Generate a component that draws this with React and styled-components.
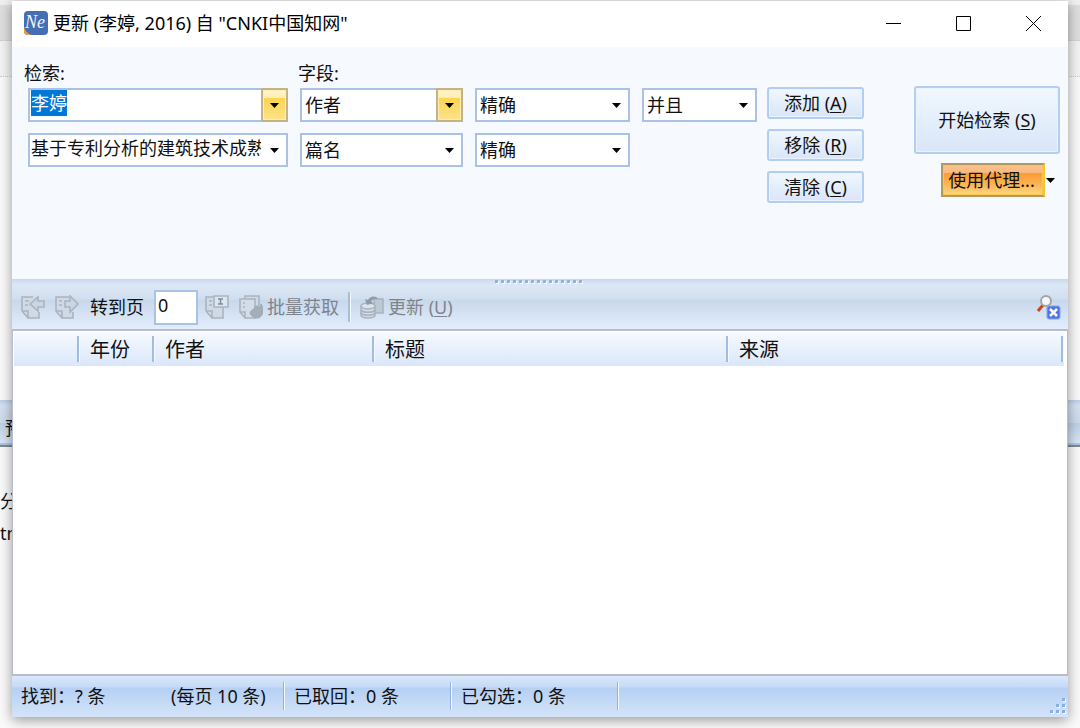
import React, { useEffect, useRef, useState } from 'react'
import styled, { createGlobalStyle, css } from 'styled-components'

const GlobalStyle = createGlobalStyle`
    *, *::before, *::after {
        box-sizing: border-box;
    }

    body {
        margin: 0;
        color: #111;
        font: 18px/24px "Noto Sans", "Noto Sans CJK SC", sans-serif;
        background: #f4f4f4;
    }

    button, input, select {
        margin: 0;
        padding: 0;
        border: 0;
        color: inherit;
        font: inherit;
        background: none;
        border-radius: 0;
        outline: none;
    }

    u {
        text-decoration-thickness: 1px;
        text-underline-offset: 2px;
    }
`

const Desktop = styled.div`
    position: relative;
    display: flex;
    min-height: 100vh;
    padding: 1px 12px 11px;
    overflow: hidden;
`

// the application that lies behind the dialog
const Behind = styled.div`
    position: absolute;
    inset: 0;
    display: grid;
    grid-template-rows: 5px 36px 36px 323px 47px 1fr;
    background: #fafafa;
`

const BehindRow = styled.div`
    background: ${props => props.$bg || 'transparent'};
    border-bottom: ${props => props.$dotted ? '1px dotted #ccc' : '0'};
`

const BehindBar = styled.div`
    padding: 16px 5px 0;
    background: linear-gradient(#bccfe5, #d5e2f2 12%, #cbdaec 50%, #bfd0e5 51%, #dbe8f8);
    border-bottom: 2px solid #85878b;
    box-shadow: inset 0 -2px #a9c7ec;
`

const BehindText = styled.div`
    padding-top: 38px;
    line-height: 32px;

    p {
        margin: 0;
    }
`

const Window = styled.main`
    position: relative;
    display: flex;
    flex-direction: column;
    flex: 1;
    min-width: 0;
    background: #f6f9fe;
    box-shadow: 0 3px 12px rgba(0, 0, 0, 0.4);
`

const TitleBar = styled.header`
    display: flex;
    align-items: center;
    height: 46px;
    padding: 0 0 2px 12px;
    background: #fff;
`

const Title = styled.h1`
    flex: 1;
    margin: 0 0 0 5px;
    color: #000;
    font-size: 18px;
    font-weight: 400;
    line-height: 24px;
`

const WindowButton = styled.button`
    display: grid;
    place-items: center;
    width: 70px;
    height: 44px;
`

const SearchPane = styled.form`
    display: flex;
    align-items: flex-start;
    min-height: 232px;
    padding: 14px 8px 8px 16px;
`

const Criteria = styled.div`
    display: grid;
    grid-template-columns: 260px 163px 155px 115px;
    grid-template-rows: 27px;
    gap: 0 12px;
`

const FieldLabel = styled.label`
    margin-left: ${props => props.$column === 1 ? '-4px' : '-2px'};
    grid-column: ${props => props.$column};
`

const Combo = styled.div`
    display: grid;
    grid-template-columns: 1fr 25px;
    height: 34px;
    margin-bottom: 11px;
    background: #fff;
    border: 2px solid #a9c2e6;
    grid-column: ${props => props.$column};
`

const arrowFace = css`
    display: grid;
    place-items: center;
    grid-column: 2;
    grid-row: 1;
    margin: ${props => props.$hot ? '-2px -2px -2px 0' : '0 -2px 0 0'};
    border: ${props => props.$hot ? '2px solid #c4b389' : '0'};
    background: ${props => props.$hot ? 'linear-gradient(#fff6cf, #fdeeb0 26%, #fdd44f 27%, #fee38b)' : 'none'};
    box-shadow: ${props => props.$hot ? 'inset 0 0 0 1px #fdeeb4' : 'none'};
`

const ArrowButton = styled.button`
    ${arrowFace}
`

const ArrowMark = styled.span`
    ${arrowFace}
    pointer-events: none;
`

const ComboInput = styled.input`
    min-width: 0;
    width: 100%;
    height: 26px;
    padding-left: 1px;
    line-height: 26px;

    &::selection {
        color: #fff;
        background: #0078d7;
    }
`

const ComboSelect = styled.select`
    grid-column: 1 / -1;
    grid-row: 1;
    width: 100%;
    padding: 0 0 1px 3px;
    appearance: none;
`

const ButtonColumn = styled.div`
    display: flex;
    flex-direction: column;
    gap: 10px;
    margin: 26px 0 0 10px;
`

const PushButton = styled.button`
    width: 97px;
    height: ${props => props.$tall ? '68px' : '32px'};
    border: 2px solid #b2cff3;
    border-radius: 3px;
    background: linear-gradient(#f2f7fe, #e4eefb 50%, #d9e6f8);
    box-shadow: inset 0 0 0 1px #eaf2fd;
`

const StartColumn = styled.div`
    display: flex;
    flex-direction: column;
    gap: 9px;
    width: 146px;
    margin: 25px 0 0 auto;

    > ${PushButton} {
        width: 100%;
    }
`

const ProxyRow = styled.div`
    display: flex;
    justify-content: flex-end;
`

const ProxyButton = styled.button`
    width: 104px;
    height: 34px;
    padding-right: 3px;
    border: 2px solid #b09a60;
    border-right-color: #f5c33a;
    background: linear-gradient(#fcc795, #fbb87a 30%, #fa9a37 31%, #fdb655 65%, #fede92);
    background-origin: border-box;
    box-shadow: inset 0 0 0 1px #fbc748;
`

const ProxyMenu = styled.button`
    display: grid;
    place-items: center;
    width: 15px;
    padding-right: 4px;
`

const Splitter = styled.div`
    display: grid;
    justify-content: center;
    height: 6px;
    padding: 1px 3px 0 0;
    background: linear-gradient(#c6d8ec, #d5e2f1 60%, #dce7f5);
    line-height: 0;
`

const ToolBar = styled.nav`
    display: flex;
    align-items: center;
    height: 44px;
    padding: 0 7px 0 9px;
    background: linear-gradient(#dde8f5, #d0deef 32%, #c7d8ea 34%, #d4e2f3 65%, #e3edfc);
`

const ToolButton = styled.button`
    display: flex;
    align-items: center;
    gap: 4px;
    margin-right: ${props => props.$gap || 0}px;
    color: #7e848c;
`

const PageLabel = styled.label`
    margin: 0 10px 0 1px;
`

const PageInput = styled.input`
    width: 44px;
    height: 35px;
    margin-right: 7px;
    padding: 0 2px 4px;
    background: #fff;
    border: 2px solid #a9c3e8;
`

const ToolRule = styled.span`
    width: 3px;
    height: 30px;
    margin: 0 9px;
    background: #a6bede;
    border-right: 1px solid #f4f8fd;
`

const Push = styled.span`
    flex: 1;
`

const Results = styled.section`
    flex: 1;
    padding: 1px 3px 0 1px;
    background: #fff;
    border: 2px solid #b9bdc7;
    border-left-width: 1px;
    border-right-width: 1px;
`

const Table = styled.table`
    width: 100%;
    border-collapse: collapse;
    table-layout: fixed;
    background: linear-gradient(#f7faff, #e9f1fd 45%, #dae7fa);
`

const HeadCell = styled.th`
    width: ${props => props.$width ? `${props.$width}px` : 'auto'};
    height: 34px;
    padding: 2px 0 0 10px;
    font-size: 20px;
    font-weight: 400;
    text-align: left;
    background: linear-gradient(90deg, #a2bce0 66%, #f5f9ff 67%) right center / 3px 26px no-repeat;
`

const StatusBar = styled.footer`
    display: flex;
    align-items: center;
    height: 41px;
    padding: 0 0 2px 9px;
    background: linear-gradient(#dae8fb, #c6daf6 26%, #b5d0f4 30%, #c5daf6 65%, #d4e4f9);
`

const StatusItem = styled.span`
    width: ${props => props.$width}px;
    line-height: 28px;
    white-space: nowrap;
    border-right: ${props => props.$rule ? '1px solid #93b2de' : '0'};
    margin-right: ${props => props.$rule ? '10px' : '0'};
    box-shadow: ${props => props.$rule ? '1px 0 #f2f7fe' : 'none'};
`

const Grip = styled.svg`
    align-self: flex-end;
    margin: 0 2px 1px auto;
`

const Caret = () => (
    <svg width="9" height="5" viewBox="0 0 9 5" aria-hidden="true">
        <path d="M0 0h9L4.5 5z" fill="#000" />
    </svg>
)

const AppIcon = () => (
    <svg width="24" height="24" viewBox="0 0 24 24" aria-hidden="true">
        <rect width="24" height="24" rx="4" fill="#456fb2" />
        <path d="M0 16c1 4 4 7 8 8H4c-2 0-4-2-4-4z" fill="#f0a22e" />
        <text x="1" y="17" fill="#eef4ff" fontFamily="Liberation Serif, serif" fontStyle="italic" fontSize="18">Ne</text>
    </svg>
)

const sheet = 'M1 2h17v21H7l-6-7z'
const fold = 'M1 16h6v7'

const toolIcons = {
    prev: (
        <>
            <path d={sheet} stroke="none" fill="#cfdae6" />
            <path d="M12 2H1v14l6 7h11v-6" />
            <path d={fold} />
            <path d="M4 6h4M4 10h3" />
            <path d="M9 9l8-7v4h6v6h-6v4z" fill="#cbd6e2" />
        </>
    ),
    next: (
        <>
            <path d={sheet} stroke="none" fill="#cfdae6" />
            <path d="M14 2H1v14l6 7h11v-6" />
            <path d={fold} />
            <path d="M4 6h3M4 10h3" />
            <path d="M10 6h5V1l8 8-8 8v-5h-5z" fill="#cbd6e2" />
        </>
    ),
    go: (
        <>
            <path d={sheet} stroke="none" fill="#cfdae6" />
            <path d="M8 2H1v14l6 7h11V12" />
            <path d={fold} />
            <path d="M4 6h3M4 10h3" />
            <path d="M9 1h14v11H9z" fill="#dce6f2" />
            <path d="M13 4h5M15.500 4v5M13 9h5" stroke="#7f8c99" strokeWidth="1.500" />
        </>
    ),
    batch: (
        <>
            <path d="M6 1h14v18H6z" fill="#cfdae6" />
            <path d="M1 4h15v19H6l-5-6z" fill="#d3dde9" />
            <path d="M1 17h5v6M4 8h2M4 12h2" />
            <path d="M22 9c0 3-1 4-2 5 0-2-1-3-3-3-1 3-5 4-6 7 1 3 4 5 7 5 4 0 6-4 6-7 0-3-1-5-2-7z" fill="#a2aeba" stroke="#9ba8b5" strokeWidth="1" />
        </>
    ),
    update: (
        <>
            <path d="M14 4h9v14h-8z" fill="#bdc9d5" />
            <path d="M1 11v9c0 4 14 4 14 0v-9" fill="#d2dce7" />
            <ellipse cx="8" cy="11" rx="7" ry="3" fill="#dce5ef" />
            <path d="M1 15c2 3 12 3 14 0M1 18c2 3 12 3 14 0" />
            <path d="M19 4c-4-4-9-3-11 1L5 4l2 6 7-2-3-1c1-3 4-4 8-3z" fill="#8d9aa8" stroke="none" />
        </>
    ),
}

const ToolIcon = ({ name }) => (
    <svg width="24" height="24" viewBox="0 0 24 24" fill="none" stroke="#a9b4c0" strokeWidth="1.600" aria-hidden="true">
        {toolIcons[name]}
    </svg>
)

const ClearFindIcon = () => (
    <svg width="24" height="26" viewBox="0 0 24 26" aria-hidden="true">
        <path d="M6 11l-5 6" stroke="#d3421c" strokeWidth="3" />
        <circle cx="9" cy="7" r="5" fill="#f5f7f7" stroke="#a1a5a6" strokeWidth="2" />
        <rect x="10" y="12" width="13" height="13" rx="2" fill="#4d74ea" stroke="#87a3f2" />
        <path d="M13 15l7 7M20 15l-7 7" stroke="#fff" strokeWidth="2.500" />
    </svg>
)

const columns = [
    { title: '', width: 66 },
    { title: '年份', width: 75 },
    { title: '作者', width: 220 },
    { title: '标题', width: 354 },
    { title: '来源' },
]

const gripDots = [[12, 0], [6, 6], [12, 6], [0, 12], [6, 12], [12, 12]]

function SelectBox({ id, label, value, options, column, hot }) {
    const [current, setCurrent] = useState(value)

    return (
        <Combo $column={column}>
            <ComboSelect id={id} aria-label={label} value={current} onChange={e => setCurrent(e.target.value)}>
                {options.map(option => <option key={option}>{option}</option>)}
            </ComboSelect>
            <ArrowMark $hot={hot}><Caret /></ArrowMark>
        </Combo>
    )
}

function App() {
    const termRef = useRef(null)

    //the first search term is selected as soon as the dialog opens
    useEffect(() => {
        termRef.current.focus()
        termRef.current.select()
    }, [])

    const fields = ['作者', '篇名']
    const matches = ['精确', '模糊']

    return (
        <Desktop>
            <GlobalStyle />
            <Behind aria-hidden="true">
                <BehindRow $bg="#f0f0f0" />
                <BehindRow $bg="#dedede" $dotted />
                <BehindRow $bg="#f3f3f3" $dotted />
                <BehindRow />
                <BehindBar>预</BehindBar>
                <BehindText>
                    <p>分</p>
                    <p>tn</p>
                </BehindText>
            </Behind>

            <Window>
                <TitleBar>
                    <AppIcon />
                    <Title>更新 (李婷, 2016) 自 "CNKI中国知网"</Title>
                    <WindowButton aria-label="最小化">
                        <svg width="15" height="15"><path d="M0 7.500h15" stroke="#000" /></svg>
                    </WindowButton>
                    <WindowButton aria-label="最大化">
                        <svg width="15" height="15"><path d="M.5.5h14v14H.5z" stroke="#000" fill="none" /></svg>
                    </WindowButton>
                    <WindowButton aria-label="关闭">
                        <svg width="15" height="15"><path d="M0 0l15 15M15 0L0 15" stroke="#000" /></svg>
                    </WindowButton>
                </TitleBar>

                <SearchPane onSubmit={e => e.preventDefault()}>
                    <Criteria>
                        <FieldLabel htmlFor="term1" $column={1}>检索:</FieldLabel>
                        <FieldLabel htmlFor="field1" $column="2 / -1">字段:</FieldLabel>

                        <Combo $column={1}>
                            <ComboInput id="term1" ref={termRef} defaultValue="李婷" />
                            <ArrowButton type="button" aria-label="检索历史" $hot><Caret /></ArrowButton>
                        </Combo>
                        <SelectBox id="field1" value="作者" options={fields} column={2} hot />
                        <SelectBox label="匹配" value="精确" options={matches} column={3} />
                        <SelectBox label="逻辑" value="并且" options={['并且', '或者']} column={4} />

                        <Combo $column={1}>
                            <ComboInput aria-label="检索 2" defaultValue="基于专利分析的建筑技术成熟度" />
                            <ArrowButton type="button" aria-label="检索历史"><Caret /></ArrowButton>
                        </Combo>
                        <SelectBox label="字段 2" value="篇名" options={fields} column={2} />
                        <SelectBox label="匹配 2" value="精确" options={matches} column={3} />
                    </Criteria>

                    <ButtonColumn>
                        <PushButton type="button">添加 (<u>A</u>)</PushButton>
                        <PushButton type="button">移除 (<u>R</u>)</PushButton>
                        <PushButton type="button">清除 (<u>C</u>)</PushButton>
                    </ButtonColumn>

                    <StartColumn>
                        <PushButton $tall>开始检索 (<u>S</u>)</PushButton>
                        <ProxyRow>
                            <ProxyButton type="button">使用代理...</ProxyButton>
                            <ProxyMenu type="button" aria-label="代理选项"><Caret /></ProxyMenu>
                        </ProxyRow>
                    </StartColumn>
                </SearchPane>

                <Splitter>
                    <svg width="88" height="4" aria-hidden="true">
                        {Array.from({ length: 15 }, (_, i) => (
                            <g key={i}>
                                <rect x={i * 6 + 1} y="1" width="3" height="3" fill="#f7faff" />
                                <rect x={i * 6} y="0" width="3" height="3" fill="#91b1df" />
                            </g>
                        ))}
                    </svg>
                </Splitter>

                <ToolBar>
                    <ToolButton aria-label="上一页" $gap={10} disabled><ToolIcon name="prev" /></ToolButton>
                    <ToolButton aria-label="下一页" $gap={10} disabled><ToolIcon name="next" /></ToolButton>
                    <PageLabel htmlFor="page">转到页</PageLabel>
                    <PageInput id="page" defaultValue="0" />
                    <ToolButton aria-label="转到" $gap={10} disabled><ToolIcon name="go" /></ToolButton>
                    <ToolButton disabled><ToolIcon name="batch" />批量获取</ToolButton>
                    <ToolRule />
                    <ToolButton disabled><ToolIcon name="update" /><span>更新 (<u>U</u>)</span></ToolButton>
                    <Push />
                    <ToolButton aria-label="清除查找"><ClearFindIcon /></ToolButton>
                </ToolBar>

                <Results>
                    <Table>
                        <thead>
                            <tr>
                                {columns.map(({ title, width }) => (
                                    <HeadCell key={title} $width={width} scope="col">{title}</HeadCell>
                                ))}
                            </tr>
                        </thead>
                    </Table>
                </Results>

                <StatusBar>
                    <StatusItem $width={150}>找到：? 条</StatusItem>
                    <StatusItem $width={113} $rule>(每页 10 条)</StatusItem>
                    <StatusItem $width={157} $rule>已取回：0 条</StatusItem>
                    <StatusItem $width={157} $rule>已勾选：0 条</StatusItem>
                    <Grip width="16" height="16" aria-hidden="true">
                        {gripDots.map(([x, y]) => (
                            <g key={`${x}-${y}`}>
                                <rect x={x + 1} y={y + 1} width="3" height="3" fill="#f4f8ff" />
                                <rect x={x} y={y} width="3" height="3" fill="#8aaee2" />
                            </g>
                        ))}
                    </Grip>
                </StatusBar>
            </Window>
        </Desktop>
    )
}

export default App
